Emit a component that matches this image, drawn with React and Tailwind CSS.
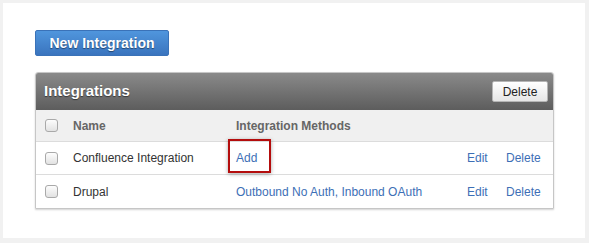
import React from 'react';

const rows = [
  { name: 'Confluence Integration', methods: 'Add', highlight: true },
  { name: 'Drupal', methods: 'Outbound No Auth, Inbound OAuth' },
];

function Checkbox() {
  return (
    <span className="block h-[13px] w-[13px] rounded-[3px] border border-[#a9a9a9] bg-gradient-to-b from-[#fdfdfd] to-[#e2e2e2]" />
  );
}

export default function App() {
  return (
    <div className="h-[243px] w-[589px] bg-[#f1f1f1] pt-[3px] pl-[3px] font-['Liberation_Sans',Arial,sans-serif]">
      <div className="h-[235px] w-[582px] bg-white pt-[27px] pl-[32px]">
        <button
          type="button"
          className="block h-[26px] w-[134px] rounded-[2px] border border-[#3a72b8] bg-gradient-to-b from-[#5096dd] to-[#3a74be] text-[14px] font-bold text-white [text-shadow:0_1px_1px_rgba(0,0,0,0.45)]"
        >
          New Integration
        </button>

        {/* Panel */}
        <div className="mt-[16px] w-[519px] rounded-t-[3px] border border-[#c6c6c6] shadow-[0_1px_2px_rgba(0,0,0,0.18)]">
          <div className="flex h-[37px] items-center justify-between rounded-t-[2px] bg-gradient-to-b from-[#8a8a8a] to-[#5d5d5d] pl-[8px] pr-[5px]">
            <span className="text-[15px] font-bold text-white [text-shadow:0_1px_1px_rgba(0,0,0,0.5)]">Integrations</span>
            <button
              type="button"
              className="h-[21px] w-[56px] rounded-[2px] border border-[#b5b5b5] bg-gradient-to-b from-white to-[#e6e6e6] text-[12px] text-[#222]"
            >
              Delete
            </button>
          </div>

          <div className="flex h-[32px] items-center border-b border-[#dcdcdc] bg-[#f0f0f0] text-[12px] font-bold text-[#666]">
            <div className="w-[37px] pl-[9px]"><Checkbox /></div>
            <div className="w-[163px]">Name</div>
            <div>Integration Methods</div>
          </div>

          {rows.map((r, i) => (
            <div
              key={r.name}
              className={`flex h-[33px] items-center text-[12px] ${i < rows.length - 1 ? 'border-b border-[#dcdcdc]' : ''}`}
            >
              <div className="w-[37px] pl-[9px]"><Checkbox /></div>
              <div className="w-[163px] text-[#333]">{r.name}</div>
              <div className="relative w-[231px] text-[#3d6fb6]">
                {r.methods}
                {r.highlight && (
                  <span className="absolute left-[-8px] top-[-10px] h-[34px] w-[43px] border-2 border-[#b40d0d] shadow-[0_1px_4px_rgba(0,0,0,0.35)]" />
                )}
              </div>
              <div className="w-[39px] text-[#3d6fb6]">Edit</div>
              <div className="text-[#3d6fb6]">Delete</div>
            </div>
          ))}
        </div>
      </div>
    </div>
  );
}
